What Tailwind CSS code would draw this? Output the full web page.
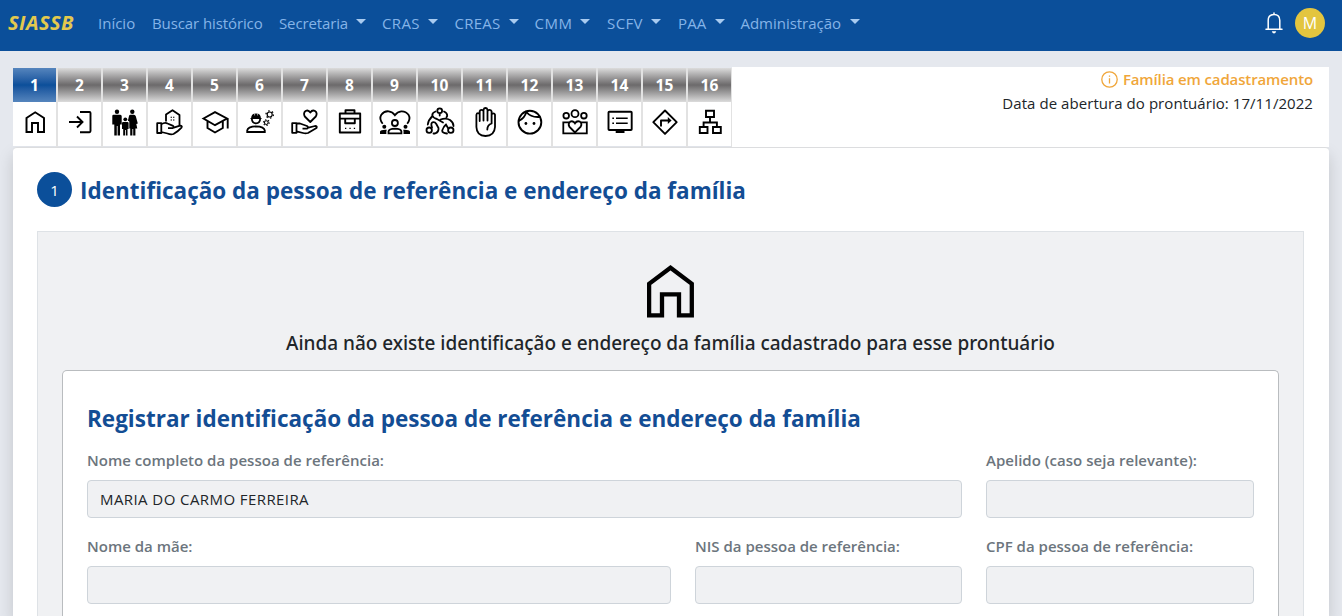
<!DOCTYPE html>
<html lang="pt-BR">
<head>
<meta charset="utf-8">
<title>SIASSB</title>
<script src="https://cdn.jsdelivr.net/npm/@tailwindcss/browser@4"></script>
</head>
<body class="h-[616px] overflow-hidden bg-[#e5e8ee] font-['Open_Sans','Noto_Sans',sans-serif] text-[15px] leading-6 text-[#212529]">

<nav class="flex h-[51px] items-center bg-[#0b4f9a] pb-[5px] pl-2 pr-[17px] text-[#85b4e8]">
  <a class="w-[90px] shrink-0 text-[20px] font-bold italic tracking-[0.45px] text-[#e3c94e]">SIASSB</a>
  <a class="w-[54px] shrink-0 whitespace-nowrap">Início</a>
  <a class="w-[127px] shrink-0 whitespace-nowrap tracking-[-0.1px]">Buscar histórico</a>
  <a class="flex w-[103px] shrink-0 items-center gap-2 tracking-[-0.13px]">Secretaria<i class="mb-[3px] border-x-[5px] border-t-[5px] border-x-transparent border-t-[#a9cbf0]"></i></a>
  <a class="flex w-[72.500px] shrink-0 items-center gap-2 tracking-[0.35px]">CRAS<i class="mb-[3px] border-x-[5px] border-t-[5px] border-x-transparent border-t-[#a9cbf0]"></i></a>
  <a class="flex w-[80px] shrink-0 items-center gap-2 tracking-[0.25px]">CREAS<i class="mb-[3px] border-x-[5px] border-t-[5px] border-x-transparent border-t-[#a9cbf0]"></i></a>
  <a class="flex w-[72.500px] shrink-0 items-center gap-2 tracking-[0.5px]">CMM<i class="mb-[3px] border-x-[5px] border-t-[5px] border-x-transparent border-t-[#a9cbf0]"></i></a>
  <a class="flex w-[71px] shrink-0 items-center gap-2 tracking-[0.4px]">SCFV<i class="mb-[3px] border-x-[5px] border-t-[5px] border-x-transparent border-t-[#a9cbf0]"></i></a>
  <a class="flex w-[62.500px] shrink-0 items-center gap-2 tracking-[0.17px]">PAA<i class="mb-[3px] border-x-[5px] border-t-[5px] border-x-transparent border-t-[#a9cbf0]"></i></a>
  <a class="flex shrink-0 items-center gap-[9px] tracking-[-0.03px]">Administração<i class="mb-[3px] border-x-[5px] border-t-[5px] border-x-transparent border-t-[#a9cbf0]"></i></a>
  <div class="ml-auto flex items-center gap-3">
    <svg class="h-[22px] w-[18px]" viewBox="0 0 18 22" fill="none" stroke="#fff" stroke-width="1.500" stroke-linecap="round"><path d="M3.200 17V8.500C3.200 4.800 5.600 2.600 9 2.600S14.800 4.800 14.800 8.500V17M1 17.300H17M9 2.500V1"/><path d="M6.800 19.200H11.200Q10.500 21.500 9 21.500T6.800 19.200Z" fill="#fff" stroke="none"/></svg>
    <span class="flex size-[30px] items-center justify-center rounded-full bg-[#e3c53f] text-[16px] font-medium text-white">M</span>
  </div>
</nav>

<div class="pl-[13px] pr-[13px] pt-4">
  <header class="flex h-20 justify-between">
    <ol class="flex pt-px text-center text-[15.5px] font-bold tracking-[0.2px] text-white">
      <li class="w-[45px] border-r-2 border-[#e2e2e2]"><div class="h-[34px] bg-linear-to-b from-[#5585bd] via-[#0b4f9a] to-[#5585bd] pt-[5px]">1</div>
        <svg class="h-11 w-[43px] bg-white" viewBox="0 0 43 44" fill="none" stroke="#000" stroke-width="1.950"><path d="M13.500 30V16L22.200 10.300L31 16V30H25V21H19V30Z"/></svg></li>
      <li class="w-[45px] border-r-2 border-[#e2e2e2]"><div class="h-[34px] bg-linear-to-b from-[#dcdcdc] via-[#6c6a6b] to-[#dcdcdc] pt-[5px]">2</div>
        <svg class="h-11 w-[43px] bg-white" viewBox="0 0 43 44" fill="none" stroke="#000" stroke-width="1.900"><path d="M11 20H24M19 14.500L24.500 20L19 25.500M22 10H31.500Q32.500 10 32.500 11V29Q32.500 30.200 31.500 30.200H22"/></svg></li>
      <li class="w-[45px] border-r-2 border-[#e2e2e2]"><div class="h-[34px] bg-linear-to-b from-[#dcdcdc] via-[#6c6a6b] to-[#dcdcdc] pt-[5px]">3</div>
        <svg class="h-11 w-[43px] bg-white" viewBox="0 0 43 44" fill="#000"><circle cx="14" cy="9.700" r="2.200"/><circle cx="22.300" cy="17.300" r="1.900"/><circle cx="29.300" cy="9.700" r="2.200"/><path d="M10.500 12.800H17.300Q18.700 12.800 18.700 14.300V22.500H17V33.500H14.600V24H13.800V33.500H11.300V22.500H9.300V14Q9.300 12.800 10.500 12.800ZM20.200 20H24.500Q25.600 20 25.600 21V27H24.500V33.500H22.800V28H22V33.500H20.200V27H19V21Q19 20 20.200 20ZM27.300 12.800H31Q32.300 12.800 32.800 14.300L34.800 21.500L33.300 22L34.300 26.500H32.400V33.500H30.200V27H29.400V33.500H27.200V26.500H26.300V19.500Q25.600 18.800 24.900 18.800L26 14Q26.300 12.800 27.300 12.800Z"/></svg></li>
      <li class="w-[45px] border-r-2 border-[#e2e2e2]"><div class="h-[34px] bg-linear-to-b from-[#dcdcdc] via-[#6c6a6b] to-[#dcdcdc] pt-[5px]">4</div>
        <svg class="h-11 w-[43px] bg-white" viewBox="0 0 43 44" fill="none" stroke="#000" stroke-width="1.800" stroke-linejoin="round"><path d="M18 19.500V12.500L24.500 8.200L31.500 13V23.500"/><path d="M9.200 21.200H13.300V31H9.200ZM13.300 22.300Q17 19.800 19.500 21.500L24.500 23.600Q26.800 25.200 24.600 26.200H20M25.800 25.600L32 23.600Q34.700 23.800 33.500 25.600Q30.500 29 25.500 32Q23 33 19.500 31.500L13.300 30"/><path d="M22.600 15.300H24M25 15.300H26.400M22.600 18H24M25 18H26.400" stroke-width="1.100"/></svg></li>
      <li class="w-[45px] border-r-2 border-[#e2e2e2]"><div class="h-[34px] bg-linear-to-b from-[#dcdcdc] via-[#6c6a6b] to-[#dcdcdc] pt-[5px]">5</div>
        <svg class="h-11 w-[43px] bg-white" viewBox="0 0 43 44" fill="none" stroke="#000" stroke-width="1.900"><path d="M10.500 16.500L22 10.200L34 16.500L22 23.200ZM14.500 19V26L22 30.500L29.800 26V19M34.700 16.500V26.500"/></svg></li>
      <li class="w-[45px] border-r-2 border-[#e2e2e2]"><div class="h-[34px] bg-linear-to-b from-[#dcdcdc] via-[#6c6a6b] to-[#dcdcdc] pt-[5px]">6</div>
        <svg class="h-11 w-[43px] bg-white" viewBox="0 0 43 44" fill="none" stroke="#000" stroke-width="1.800"><path d="M9.200 30V28.500Q9.800 24.500 18 24.400Q26 24.500 26.800 28.500V30ZM13.800 16.500Q14 21.300 18 21.300T22.200 16.500"/><path d="M12.500 16.500H23.500M13.800 16.500Q13.500 12 18 12T22.200 16.500Z" fill="#000" stroke-width="1.200"/><path d="M16.600 11.500V13.500M19.600 11.500V13.500" stroke="#fff" stroke-width=".6"/><circle cx="31.700" cy="12.500" r="2.500" stroke-width="1.200"/><circle cx="31.700" cy="12.500" r="3.700" stroke-width="1.300" stroke-dasharray="1.500 2.370"/><circle cx="28.300" cy="20.600" r="1.900" stroke-width="1.100"/><circle cx="28.300" cy="20.600" r="2.900" stroke-width="1.100" stroke-dasharray="1.200 1.840"/></svg></li>
      <li class="w-[45px] border-r-2 border-[#e2e2e2]"><div class="h-[34px] bg-linear-to-b from-[#dcdcdc] via-[#6c6a6b] to-[#dcdcdc] pt-[5px]">7</div>
        <svg class="h-11 w-[43px] bg-white" viewBox="0 0 43 44" fill="none" stroke="#000" stroke-width="1.800" stroke-linejoin="round"><path d="M9.200 21.200H13.500V30.800H9.200ZM13.500 21.500H17L24 24Q26 25.500 24 26.600H19.500M25.500 25.700L32 24Q34.600 24.200 33.500 26L25 31Q22.500 31.800 20 31L13.500 29.300"/><path d="M27.300 20L21.800 14.500Q20 11 22.600 9Q25.500 7.600 27.300 10.600Q29.200 7.600 32 9Q34.800 11 32.800 14.500Z"/></svg></li>
      <li class="w-[45px] border-r-2 border-[#e2e2e2]"><div class="h-[34px] bg-linear-to-b from-[#dcdcdc] via-[#6c6a6b] to-[#dcdcdc] pt-[5px]">8</div>
        <svg class="h-11 w-[43px] bg-white" viewBox="0 0 43 44" fill="none" stroke="#000" stroke-width="1.900" stroke-linejoin="round"><path d="M11.800 11.500H32.200V30.500H11.800ZM11.800 16.600H32.200M17.500 11.500V8.200H26.500V11.500M17.200 17V21.300H26.800V17"/><path d="M17 26.300H18.300M21.400 26.300H22.700M25.800 26.300H27.100" stroke-width="1.300"/></svg></li>
      <li class="w-[45px] border-r-2 border-[#e2e2e2]"><div class="h-[34px] bg-linear-to-b from-[#dcdcdc] via-[#6c6a6b] to-[#dcdcdc] pt-[5px]">9</div>
        <svg class="h-11 w-[43px] bg-white" viewBox="0 0 43 44" fill="none" stroke="#000" stroke-width="1.800"><path d="M9.700 21.700Q5.800 17 8.300 12.800Q11.200 8.800 15.700 9.300Q19.500 9.800 21.900 13.200Q24.500 9.700 28.200 9.300Q32.800 9 35.500 12.800Q38 17 34.200 21.700"/><circle cx="21.900" cy="21" r="3"/><path d="M15.500 31.300V29.500Q16 26.800 22 26.700Q28 26.800 28.400 29.500V31.300Z"/><g fill="#000" stroke="none"><circle cx="11.300" cy="24.700" r="2"/><circle cx="32.500" cy="24.700" r="2"/><path d="M7 32V29.500Q8 27.400 13.800 27.800Q13 29 13.400 32ZM37 32V29.500Q36 27.400 30.200 27.800Q30.800 29 30.500 32Z"/></g></svg></li>
      <li class="w-[45px] border-r-2 border-[#e2e2e2]"><div class="h-[34px] bg-linear-to-b from-[#dcdcdc] via-[#6c6a6b] to-[#dcdcdc] pt-[5px]">10</div>
        <svg class="h-11 w-[43px] bg-white" viewBox="0 0 43 44" fill="none" stroke="#000" stroke-width="1.800" stroke-linecap="round"><circle cx="21.700" cy="8.800" r="2.400"/><circle cx="11.200" cy="28.200" r="2.700"/><circle cx="32.800" cy="28.200" r="2.700"/><path d="M17.500 9.500Q14 10.800 14.300 13.500Q15.500 16.300 19 17L25 20.500M26 9.500Q29.500 11 29.200 14L28.500 15.200M21.700 11.500V13.500M14.500 14Q10.300 18 9.800 22.500M14 25.500Q12.500 21.500 14.500 20.300Q16.800 19.500 18.300 22L20.500 26Q21 30 17 31.500H15.500M22.500 17.500Q28 15.500 32 18Q35.500 20.500 35.500 24M30 26L28 22.500Q25.500 24.500 24.200 28.500Q24 31.200 29 31.500"/></svg></li>
      <li class="w-[45px] border-r-2 border-[#e2e2e2]"><div class="h-[34px] bg-linear-to-b from-[#dcdcdc] via-[#6c6a6b] to-[#dcdcdc] pt-[5px]">11</div>
        <svg class="h-11 w-[43px] bg-white" viewBox="0 0 43 44" fill="none" stroke="#000" stroke-width="1.800" stroke-linecap="round" stroke-linejoin="round"><path d="M16.700 19V12.500Q16.300 11.200 15 11.200T13.400 12.800V25Q13.700 33.800 22.500 34Q31.500 33.800 32 25V12.800Q31.700 11.300 30.300 11.300T28.600 12.800V21M16.700 19V9.200Q17 7.800 18.500 7.800T20.500 9.200V18.500M20.500 9V7.700Q21 6 22.500 6T24.500 7.700V18.500M24.500 9.200Q25 7.800 26.500 7.800T28.600 9.300V21M28.600 21.500Q24.300 23 24.300 27.500"/></svg></li>
      <li class="w-[45px] border-r-2 border-[#e2e2e2]"><div class="h-[34px] bg-linear-to-b from-[#dcdcdc] via-[#6c6a6b] to-[#dcdcdc] pt-[5px]">12</div>
        <svg class="h-11 w-[43px] bg-white" viewBox="0 0 43 44" fill="none" stroke="#000" stroke-width="1.900"><circle cx="21.900" cy="20.200" r="11.400"/><path d="M10.800 18.800Q16.500 16.500 18.300 10Q23.500 16 32.500 14.800"/><circle cx="17.900" cy="21.500" r="1.400" fill="#000" stroke="none"/><circle cx="26" cy="21.500" r="1.400" fill="#000" stroke="none"/></svg></li>
      <li class="w-[45px] border-r-2 border-[#e2e2e2]"><div class="h-[34px] bg-linear-to-b from-[#dcdcdc] via-[#6c6a6b] to-[#dcdcdc] pt-[5px]">13</div>
        <svg class="h-11 w-[43px] bg-white" viewBox="0 0 43 44" fill="none" stroke="#000" stroke-width="1.800"><circle cx="13.200" cy="13.700" r="2.800"/><circle cx="22" cy="11.700" r="3.500"/><circle cx="30.900" cy="13.700" r="2.800"/><path d="M16 20.300H10.300V31.300H33.800V20.300H28"/><path d="M22 30.500L16.300 24.700Q14.700 21.500 17.200 19.600Q20.300 18.400 22 21.300Q23.800 18.400 26.900 19.600Q29.400 21.500 27.700 24.700Z"/></svg></li>
      <li class="w-[45px] border-r-2 border-[#e2e2e2]"><div class="h-[34px] bg-linear-to-b from-[#dcdcdc] via-[#6c6a6b] to-[#dcdcdc] pt-[5px]">14</div>
        <svg class="h-11 w-[43px] bg-white" viewBox="0 0 43 44" fill="none" stroke="#000" stroke-width="1.900"><rect x="10.500" y="9.800" width="23.200" height="18.200" rx=".8"/><path d="M14.300 16.300H16M18 16.300H29.700M14.300 21.300H16M18 21.300H29.700" stroke-width="1.600"/><path d="M17.700 28H26.500V31H17.700Z" fill="#000" stroke="none"/></svg></li>
      <li class="w-[45px] border-r-2 border-[#e2e2e2]"><div class="h-[34px] bg-linear-to-b from-[#dcdcdc] via-[#6c6a6b] to-[#dcdcdc] pt-[5px]">15</div>
        <svg class="h-11 w-[43px] bg-white" viewBox="0 0 43 44" fill="none" stroke="#000" stroke-width="1.900" stroke-linejoin="round"><path d="M22 8.500L33.700 20.200L22 31.900L10.300 20.200ZM18 24.500V18.500H26"/><path d="M24.800 15L28.600 18.500L24.800 22Z" fill="#000" stroke="none"/></svg></li>
      <li class="w-[44px] border-r border-[#e2e2e2]"><div class="h-[34px] bg-linear-to-b from-[#dcdcdc] via-[#6c6a6b] to-[#dcdcdc] pt-[5px]">16</div>
        <svg class="h-11 w-[43px] bg-white" viewBox="0 0 43 44" fill="none" stroke="#000" stroke-width="1.900"><path d="M18 8.800H26V15H18ZM11.800 25H19.500V31H11.800ZM25 25H32.800V31H25ZM22 15V20.500M15.600 25V20.500H28.900V25"/></svg></li>
    </ol>
    <div class="w-[597px] bg-white pr-4 text-right">
      <p class="flex items-center justify-end gap-[5px] font-semibold tracking-[-0.13px] text-[#f0a63a]">
        <svg class="size-[17px]" viewBox="0 0 17 17" fill="none" stroke="#f0a63a" stroke-width="1.300"><circle cx="8.500" cy="8.500" r="7.700"/><path d="M8.500 7.300V12.500M8.500 4.500V5.800"/></svg>Família em cadastramento</p>
      <p class="tracking-[0.06px]">Data de abertura do prontuário: 17/11/2022</p>
    </div>
  </header>

  <main class="h-[469px] rounded-t-[4px] border-t border-[#dcdddf] bg-white px-6 pt-6 shadow-[0_8px_16px_rgba(0,0,0,0.15)]">
    <div class="flex h-9 items-start gap-2">
      <span class="flex size-[35px] items-center justify-center rounded-full bg-[#0b4f9a] text-white">1</span>
      <h1 class="whitespace-nowrap pt-px text-[22.5px] font-bold leading-9 text-[#134d94]">Identificação da pessoa de referência e endereço da família</h1>
    </div>
    <section class="mt-[23px] mr-px h-[385px] overflow-hidden border border-b-0 border-[#dee2e6] bg-[#f0f1f3] px-6">
      <svg class="ml-[585px] mt-[33px] h-[53px] w-[47px]" viewBox="0 0 47 53" fill="none" stroke="#000" stroke-width="4.300"><path d="M2.100 50.300V18.800L23.500 2.800L44.800 18.800V50.300H32V29.300H15V50.300Z"/></svg>
      <p class="mt-[9px] text-center font-['Noto_Sans',sans-serif] text-[19px] font-medium leading-8 tracking-[-0.03px]">Ainda não existe identificação e endereço da família cadastrado para esse prontuário</p>
      <form class="mt-[11px] h-[246px] rounded-t-[5px] border border-b-0 border-[#b9bcbf] bg-white px-6 pt-8">
        <h2 class="whitespace-nowrap text-[22.5px] font-bold leading-8 text-[#134d94]">Registrar identificação da pessoa de referência e endereço da família</h2>
        <div class="mt-[13px] grid grid-cols-[875px_268px] gap-x-6">
          <label class="h-8 font-semibold tracking-[0.02px] text-[#6c757d]">Nome completo da pessoa de referência:</label>
          <label class="h-8 font-semibold tracking-[0.02px] text-[#6c757d]">Apelido (caso seja relevante):</label>
          <div class="h-[38px] rounded border border-[#ced4da] bg-[#f0f1f3] px-3 leading-9 tracking-[0.42px]">MARIA DO CARMO FERREIRA</div>
          <div class="h-[38px] rounded border border-[#ced4da] bg-[#f0f1f3]"></div>
        </div>
        <div class="mt-4 grid grid-cols-[584px_267px_268px] gap-x-6">
          <label class="h-8 font-semibold text-[#6c757d]">Nome da mãe:</label>
          <label class="h-8 font-semibold text-[#6c757d]">NIS da pessoa de referência:</label>
          <label class="h-8 font-semibold text-[#6c757d]">CPF da pessoa de referência:</label>
          <div class="h-[38px] rounded border border-[#ced4da] bg-[#f0f1f3]"></div>
          <div class="h-[38px] rounded border border-[#ced4da] bg-[#f0f1f3]"></div>
          <div class="h-[38px] rounded border border-[#ced4da] bg-[#f0f1f3]"></div>
        </div>
      </form>
    </section>
  </main>
</div>
</body>
</html>
